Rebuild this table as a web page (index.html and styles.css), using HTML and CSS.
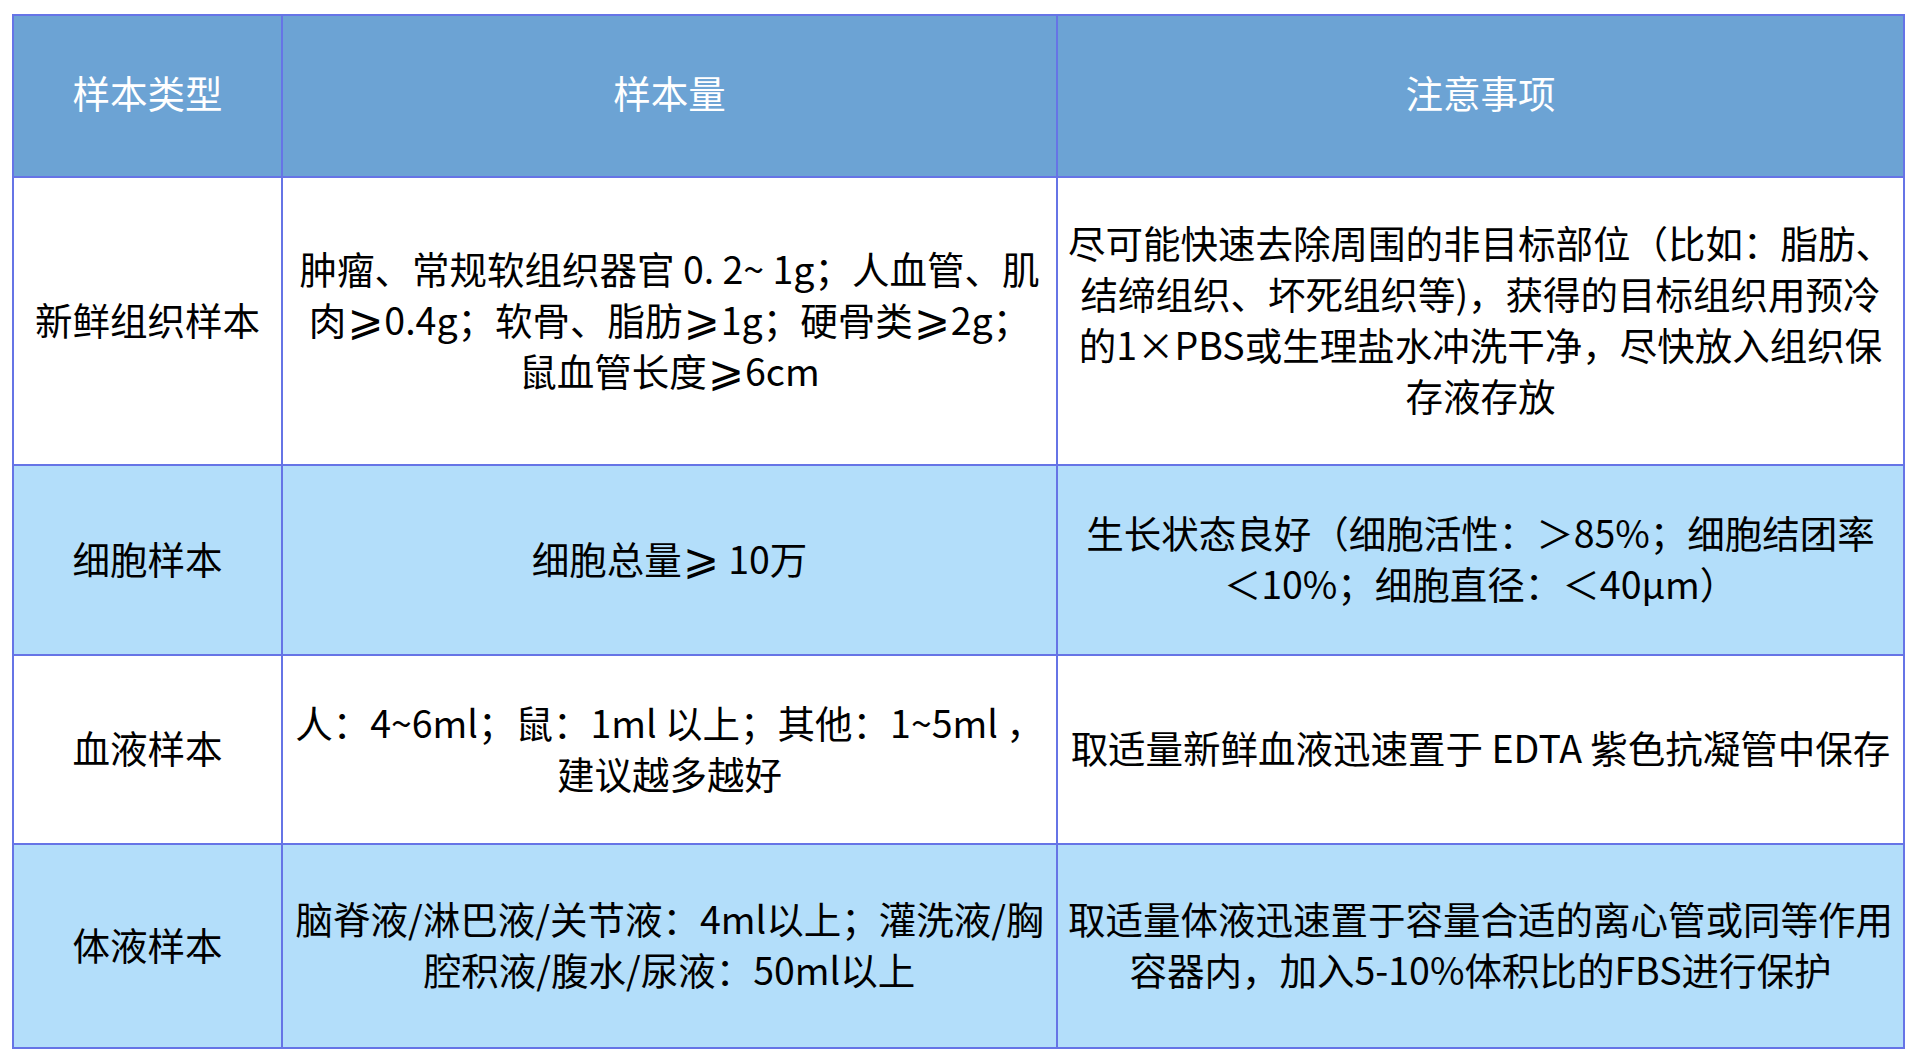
FILE: index.html
```html
<!DOCTYPE html>
<html lang="zh-CN">
<head>
<meta charset="utf-8">
<title>样本要求</title>
<link rel="stylesheet" href="styles.css">
</head>
<body>
<div class="sheet">
  <div class="cell head"><p class="txt">样本类型</p></div>
  <div class="cell head"><p class="txt">样本量</p></div>
  <div class="cell head"><p class="txt">注意事项</p></div>

  <div class="cell"><p class="txt">新鲜组织样本</p></div>
  <div class="cell"><p class="txt">肿瘤、常规软组织器官 0. 2~ 1g；人血管、肌<br>肉<span class="ge">⩾</span>0.4g；软骨、脂肪<span class="ge">⩾</span>1g；硬骨类<span class="ge">⩾</span>2g；<br>鼠血管长度<span class="ge">⩾</span>6cm</p></div>
  <div class="cell"><p class="txt">尽可能快速去除周围的非目标部位（比如：脂肪、<br>结缔组织、坏死组织等)，获得的目标组织用预冷<br>的1×PBS或生理盐水冲洗干净，尽快放入组织保<br>存液存放</p></div>

  <div class="cell alt"><p class="txt">细胞样本</p></div>
  <div class="cell alt"><p class="txt">细胞总量<span class="ge">⩾</span> 10万</p></div>
  <div class="cell alt"><p class="txt">生长状态良好（细胞活性：＞85%；细胞结团率<br>＜10%；细胞直径：＜40μm）</p></div>

  <div class="cell"><p class="txt">血液样本</p></div>
  <div class="cell"><p class="txt">人：4~6ml；鼠：1ml 以上；其他：1~5ml ，<br>建议越多越好</p></div>
  <div class="cell"><p class="txt">取适量新鲜血液迅速置于 EDTA 紫色抗凝管中保存</p></div>

  <div class="cell alt"><p class="txt">体液样本</p></div>
  <div class="cell alt"><p class="txt">脑脊液/淋巴液/关节液：4ml以上；灌洗液/胸<br>腔积液/腹水/尿液：50ml以上</p></div>
  <div class="cell alt"><p class="txt">取适量体液迅速置于容量合适的离心管或同等作用<br>容器内，加入5-10%体积比的FBS进行保护</p></div>
</div>
</body>
</html>
```

FILE: styles.css
```css
html, body {
  margin: 0;
  padding: 0;
  background: #ffffff;
}

body {
  padding: 14px 0 0 12px;
  font-family: "Noto Sans CJK SC", "Noto Sans", "DejaVu Sans", sans-serif;
}

.sheet {
  display: grid;
  grid-template-columns: 269px 775px 847px;
  grid-template-rows: 162px 288px 190px 189px 204px;
  width: 1893px;
  box-sizing: border-box;
  border-left: 2px solid #6674e6;
  border-top: 2px solid #6674e6;
}

.cell {
  box-sizing: border-box;
  border-right: 2px solid #6674e6;
  border-bottom: 2px solid #6674e6;
  display: flex;
  align-items: center;
  justify-content: center;
  font-size: 37.5px;
  line-height: 51px;
  color: #000000;
  background: #ffffff;
  padding: 0 2px 6px;
}

.txt {
  margin: 0;
  text-align: center;
  white-space: nowrap;
}

.head {
  background: #6ca3d4;
  color: #ffffff;
  padding-bottom: 9px;
}

.alt {
  background: #b3defa;
}

.ge {
  font-family: "DejaVu Sans ExtraLight", "DejaVu Sans", sans-serif;
  font-size: 1.15em;
  line-height: 0;
  padding: 0 1px;
}
```
